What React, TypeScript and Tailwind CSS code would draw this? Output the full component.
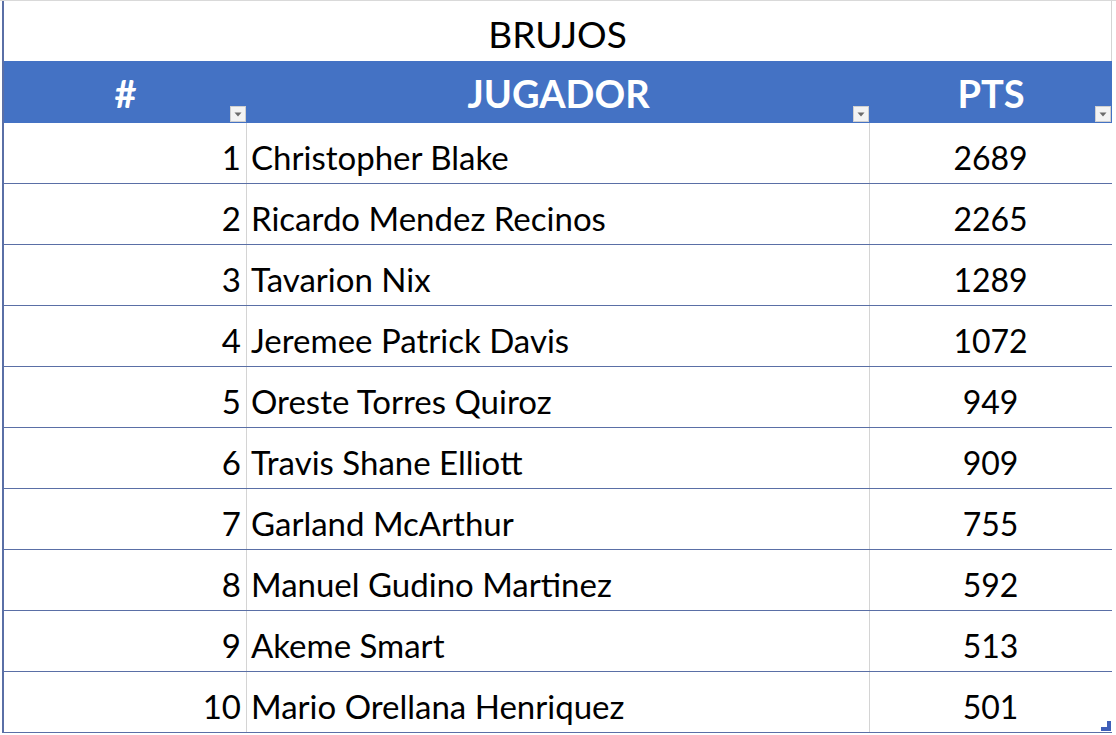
const players = [
  { n: 1, name: "Christopher Blake", pts: 2689 },
  { n: 2, name: "Ricardo Mendez Recinos", pts: 2265 },
  { n: 3, name: "Tavarion Nix", pts: 1289 },
  { n: 4, name: "Jeremee Patrick Davis", pts: 1072 },
  { n: 5, name: "Oreste Torres Quiroz", pts: 949 },
  { n: 6, name: "Travis Shane Elliott", pts: 909 },
  { n: 7, name: "Garland McArthur", pts: 755 },
  { n: 8, name: "Manuel Gudino Martinez", pts: 592 },
  { n: 9, name: "Akeme Smart", pts: 513 },
  { n: 10, name: "Mario Orellana Henriquez", pts: 501 },
];

const FilterButton = () => (
  <div className="absolute right-[1px] bottom-[1px] w-[16px] h-[16px] bg-[#f3f3f3] border border-[#cfcfcf] flex items-center justify-center">
    <svg width="8" height="5" viewBox="0 0 8 5">
      <path d="M0.5 0.5 L7.5 0.5 L4 4.5 Z" fill="#6b6b6b" />
    </svg>
  </div>
);

const App = () => {
  return (
    <div className="w-[1116px] h-[735px] bg-white overflow-hidden font-['Lato',sans-serif] text-black">
      <div className="h-full border-t border-[#d9d9d9] pl-[2px] pr-[4px] flex flex-col">
        <div className="w-[1110px] flex flex-col border-l-2 border-[#5a6fa6]">
          {/* Title row */}
          <div className="h-[60px] flex items-center justify-center border-r border-[#d4d4d4] pt-[4px]">
            <span className="text-[37px] leading-none">BRUJOS</span>
          </div>

          {/* Header row */}
          <div className="h-[62px] bg-[#4472c4] text-white font-bold text-[38px] grid grid-cols-[243px_623px_242px]">
            <div className="relative flex items-center justify-center pt-[2px]">
              <span className="leading-none">#</span>
              <FilterButton />
            </div>
            <div className="relative flex items-center justify-center pt-[2px]">
              <span className="leading-none">JUGADOR</span>
              <FilterButton />
            </div>
            <div className="relative flex items-center justify-center pt-[2px]">
              <span className="leading-none">PTS</span>
              <FilterButton />
            </div>
          </div>

          {/* Data rows */}
          {players.map((p) => (
            <div
              key={p.n}
              className="h-[61px] grid grid-cols-[243px_623px_242px] border-b border-[#5a6fa6] text-[33px]"
            >
              <div className="flex items-center justify-end pr-[5px] pt-[9px] border-r border-[#d4d4d4]">
                <span className="leading-none">{p.n}</span>
              </div>
              <div className="flex items-center pl-[4px] pt-[9px] border-r border-[#d4d4d4]">
                <span className="leading-none">{p.name}</span>
              </div>
              <div className="relative flex items-center justify-center pt-[9px] pr-[1px]">
                <span className="leading-none text-[32px]">{p.pts}</span>
                {p.n === 10 && (
                  <svg className="absolute right-[1px] bottom-[1px]" width="10" height="10" viewBox="0 0 10 10">
                    <path d="M10 0 L10 10 L0 10 L0 6 L6 6 L6 0 Z" fill="#3f5fb8" />
                  </svg>
                )}
              </div>
            </div>
          ))}
        </div>
      </div>
    </div>
  );
};

export default App;
